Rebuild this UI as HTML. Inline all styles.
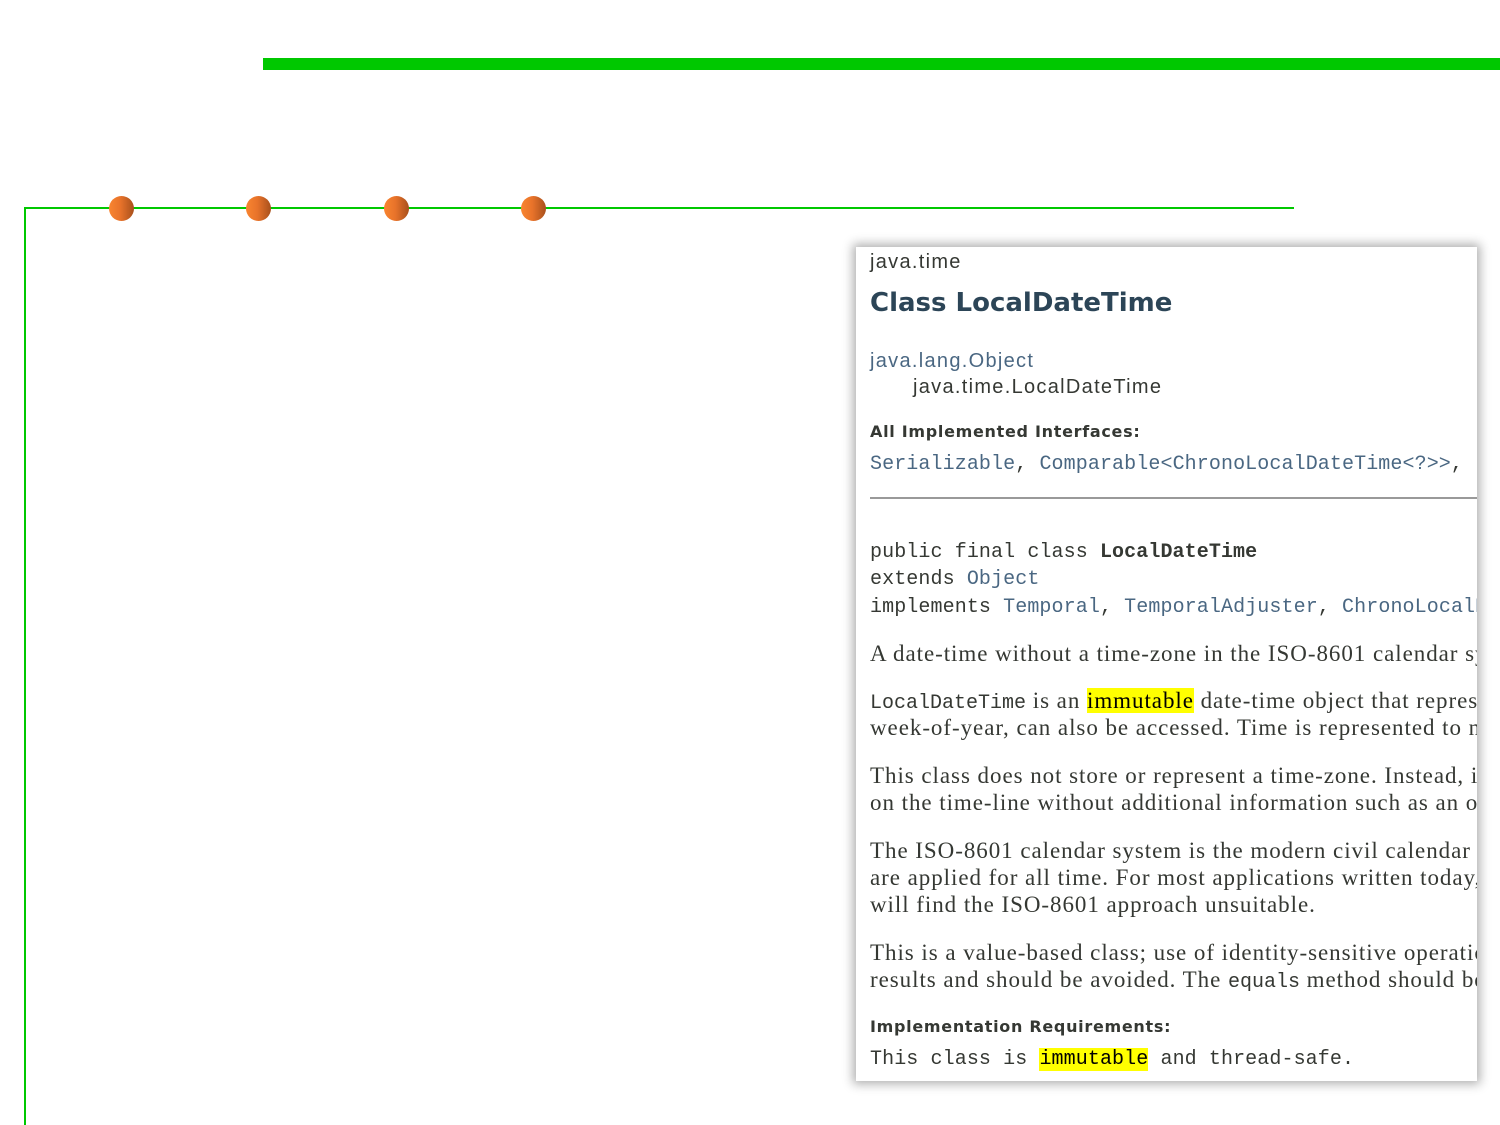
<!DOCTYPE html>
<html><head><meta charset="utf-8"><style>
body{margin:0;width:1500px;height:1125px;background:#fff;position:relative;overflow:hidden;font-family:"Liberation Sans",sans-serif;color:#353833}
.a{position:absolute}
.dot{position:absolute;width:25px;height:25px;border-radius:50%;background:linear-gradient(90deg,#f98530 0%,#e8732a 45%,#a8501c 100%);top:196px}
#p{position:absolute;left:856px;top:247px;width:621px;height:834px;background:#fff;box-shadow:0 0 10px 3px rgba(0,0,0,.32);overflow:hidden}
#p .a{white-space:nowrap;left:14px}
.s{font-family:"Liberation Sans",sans-serif;font-size:20px;letter-spacing:1.3px}
.m{font-family:"Liberation Mono",monospace;font-size:20px;letter-spacing:0.1px}
.r{font-family:"Liberation Serif",serif;font-size:23px;letter-spacing:0.95px}
.r .m{font-size:20px;letter-spacing:0}
.b{font-family:"DejaVu Sans",sans-serif;font-weight:bold;font-size:16px;letter-spacing:0.7px}
.l{color:#4a6782}
.hl{background:#ff0;color:#000}
</style></head><body>
<div class="a" style="left:263px;top:58px;width:1237px;height:12px;background:#00c800"></div>
<div class="a" style="left:24px;top:207px;width:1270px;height:2px;background:#00c800"></div>
<div class="a" style="left:24px;top:207px;width:2px;height:918px;background:#00c800"></div>
<div class="dot" style="left:109px"></div>
<div class="dot" style="left:246px"></div>
<div class="dot" style="left:384px"></div>
<div class="dot" style="left:521px"></div>
<div id="p">
<div class="a s" style="top:4px">java.time</div>
<div class="a" style="top:41px;font-family:'DejaVu Sans',sans-serif;font-size:26px;font-weight:bold;color:#2c4557">Class LocalDateTime</div>
<div class="a s l" style="top:103px">java.lang.Object</div>
<div class="a s" style="top:129px;left:57px!important">java.time.LocalDateTime</div>
<div class="a b" style="top:175px">All Implemented Interfaces:</div>
<div class="a m l" style="top:206px">Serializable<span style="color:#353833">,</span> Comparable&lt;ChronoLocalDateTime&lt;?&gt;&gt;<span style="color:#353833">,</span></div>
<div class="a" style="top:250px;width:620px;height:2px;background:#999"></div>
<div class="a m" style="top:294px">public final class <b>LocalDateTime</b></div>
<div class="a m" style="top:321px">extends <span class="l">Object</span></div>
<div class="a m" style="top:349px">implements <span class="l">Temporal</span>, <span class="l">TemporalAdjuster</span>, <span class="l">ChronoLocalDateTime</span></div>
<div class="a r" style="top:394px">A date-time without a time-zone in the ISO-8601 calendar system</div>
<div class="a r" style="top:441px"><span class="m">LocalDateTime</span> is an <span class="hl">immutable</span> date-time object that represents</div>
<div class="a r" style="top:468px">week-of-year, can also be accessed. Time is represented to nano</div>
<div class="a r" style="top:516px">This class does not store or represent a time-zone. Instead, it is</div>
<div class="a r" style="top:543px">on the time-line without additional information such as an offset</div>
<div class="a r" style="top:591px">The ISO-8601 calendar system is the modern civil calendar system</div>
<div class="a r" style="top:618px">are applied for all time. For most applications written today, the</div>
<div class="a r" style="top:645px">will find the ISO-8601 approach unsuitable.</div>
<div class="a r" style="top:693px">This is a value-based class; use of identity-sensitive operations</div>
<div class="a r" style="top:720px">results and should be avoided. The <span class="m">equals</span> method should be</div>
<div class="a b" style="top:770px">Implementation Requirements:</div>
<div class="a m" style="top:801px">This class is <span class="hl">immutable</span> and thread-safe.</div>
</div>
</body></html>
